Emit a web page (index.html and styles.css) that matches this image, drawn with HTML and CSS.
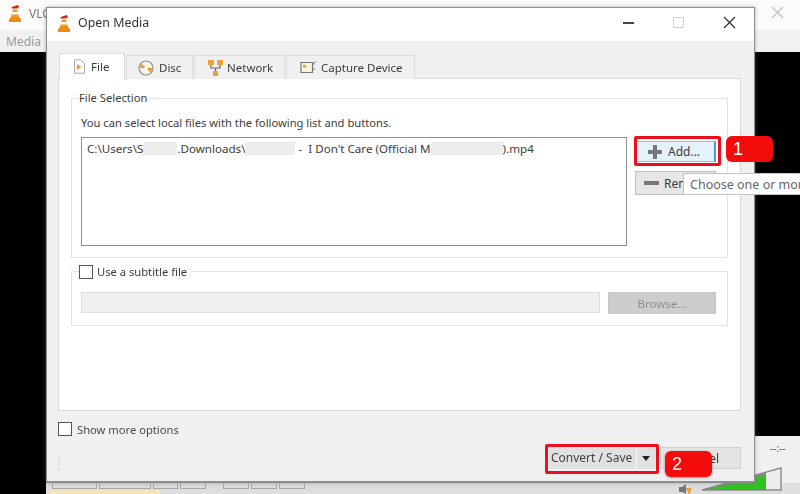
FILE: index.html
```html
<!DOCTYPE html>
<html lang="en">
<head>
<meta charset="utf-8">
<title>Open Media</title>
<link rel="stylesheet" href="styles.css">
</head>
<body>
<svg class="defs" width="0" height="0" aria-hidden="true">
  <symbol id="cone" viewBox="0 0 14 18">
    <path d="M1 15.5 3 13h8l2 2.5V18H1z" fill="#f08a12"/>
    <path d="M5.2 4.5h3.6L11 13H3z" fill="#f39a1e"/>
    <path d="M4.4 8h5.2l.7 2.4H3.7z" fill="#fff"/>
    <path d="M3.2 3.2 9.5 1l1.6 1.2-1.5 2.4-5 .4z" fill="#d8261c"/>
    <path d="M4.2 4.6h5.4v1H4.2z" fill="#f3f3f3"/>
  </symbol>
</svg>
<main class="desktop">
  <section class="vlc">
    <div class="vlc-title">
      <svg class="cone-bg"><use href="#cone"/></svg>
      <span class="vlc-name">VLC</span>
      <svg class="vlc-close" width="13" height="13" viewBox="0 0 13 13"><path d="M1 1l11 11M12 1 1 12" stroke="#c6c6c6" stroke-width="1.500"/></svg>
    </div>
    <div class="vlc-menu">Media</div>
    <div class="vlc-video"></div>
    <div class="vlc-controls">
      <div class="ctl-black"></div>
      <div class="ctl-main">
        <div class="ctl-spacer"></div>
        <div class="ctl-strip">
          <i class="ctl-btn w-a"></i><i class="ctl-btn w-b"></i><i class="ctl-btn w-c"></i><i class="ctl-btn w-d"></i><i class="ctl-gap"></i><i class="ctl-btn w-d"></i><i class="ctl-btn w-d"></i><i class="ctl-btn w-d"></i>
        </div>
      </div>
    </div>
    <span class="vlc-time">--:--</span>
    <svg class="volume" width="82" height="26" viewBox="0 0 82 26">
      <path d="M1 24 80 2v22z" fill="#ececec" stroke="#8b8b8b" stroke-width="1.4"/>
      <path d="M2 24 65 7v17z" fill="#2fc21f"/>
      <path d="M2 24 65 7v3L8 24z" fill="#6d9c64"/>
    </svg>
    <svg class="speaker" width="16" height="13" viewBox="0 0 16 13">
      <path d="M1 4h3l4-3v10L4 9H1z" fill="#777"/>
      <path d="m8 5 3 7 3-7z" fill="#ef9a33"/>
    </svg>
  </section>

  <section class="dialog">
    <header class="titlebar">
      <svg class="cone"><use href="#cone"/></svg>
      <h1 class="title">Open Media</h1>
      <div class="win-controls">
        <span class="win-min"></span>
        <span class="win-max"></span>
        <svg class="win-close" width="13" height="13" viewBox="0 0 13 13"><path d="M1 1l11 11M12 1 1 12" stroke="#333" stroke-width="1.3"/></svg>
      </div>
    </header>

    <div class="dialog-body">
      <nav class="tabs">
        <div class="tab tab-file is-active">
          <svg width="13" height="15" viewBox="0 0 13 15"><path d="M1.500.8h6.500l3.500 3.500v9.900h-10z" fill="#fff" stroke="#aaa"/><path d="M4 5l4.500 3L4 11z" fill="#f09a24"/></svg>
          File
        </div>
        <div class="tab tab-disc">
          <svg width="16" height="16" viewBox="0 0 16 16"><circle cx="8" cy="8" r="7" fill="#fbf4e6" stroke="#8d8d8d" stroke-width="1.2"/><path d="M8 8 3.500 3.800A6 6 0 0 0 2.200 8zM8 8l4.500 4.200A6 6 0 0 0 14 8z" fill="#ef9a24"/><circle cx="8" cy="8" r="1.600" fill="#fff"/></svg>
          Disc
        </div>
        <div class="tab tab-net">
          <svg width="17" height="16" viewBox="0 0 17 16"><path d="M4 5v3h9V5M8.500 8v4" fill="none" stroke="#666" stroke-width="1.200"/><path d="M1 0h6v5H1zM10 0h6v5h-6zM6 11h5v5H6z" fill="#e9a33c"/></svg>
          Network
        </div>
        <div class="tab tab-cap">
          <svg width="16" height="15" viewBox="0 0 16 15"><path d="M1 2.500h11.500v10H1z" fill="#fdf3dc" stroke="#777" stroke-width="1.200"/><path d="M3 5h3v2.500H3z" fill="#ef9a24"/><path d="M12.500 5 15.500 1.500M12.500 9H15" stroke="#777"/></svg>
          Capture Device
        </div>
      </nav>

      <div class="panel">
        <div class="group group-files">
          <div class="legend">File Selection</div>
          <p class="hint">You can select local files with the following list and buttons.</p>
          <div class="files-row">
            <div class="listbox">C:\Users\S<span class="smudge s1"></span>.Downloads\<span class="smudge s2"></span> -&nbsp; I Don't Care (Official M<span class="smudge s3"></span>).mp4</div>
            <div class="side-buttons">
              <button class="btn btn-add" type="button"><span class="plus"></span>Add...</button>
              <button class="btn btn-rem" type="button"><span class="minus"></span>Remove</button>
            </div>
          </div>
        </div>

        <div class="group group-sub">
          <div class="legend legend-check"><span class="check"></span>Use a subtitle file</div>
          <div class="sub-row">
            <div class="sub-input"></div>
            <button class="btn btn-browse" type="button" disabled>Browse...</button>
          </div>
        </div>
      </div>

      <div class="more-row"><span class="check"></span>Show more options</div>
      <div class="ghost"></div>

      <footer class="actions">
        <div class="split">
          <span class="split-label">Convert / Save</span>
          <span class="split-arrow"></span>
        </div>
        <button class="btn btn-cancel" type="button">Cancel</button>
      </footer>
    </div>
  </section>

  <div class="tooltip">Choose one or more media files to open</div>
  <div class="hl hl-add"></div>
  <div class="hl hl-convert"></div>
  <div class="badge badge-1">1</div>
  <div class="badge badge-2">2</div>
</main>
</body>
</html>
```

FILE: styles.css
```css
* { box-sizing: border-box; }
html, body { margin: 0; padding: 0; }
body {
  width: 800px;
  height: 494px;
  overflow: hidden;
  font-family: "Noto Sans", "Open Sans", sans-serif;
  font-size: 11.2px;
  color: #3c3c3c;
  background: #000;
}
.defs { position: absolute; }
.desktop {
  position: relative;
  width: 800px;
  height: 494px;
  overflow: hidden;
  filter: blur(0.55px);
}

/* background VLC window */
.vlc { display: flex; flex-direction: column; height: 100%; }
.vlc-title {
  height: 30px;
  background: #fbfbfb;
  display: flex;
  align-items: flex-start;
  padding: 4px 0 0 8px;
  position: relative;
}
.cone-bg { width: 14px; height: 18px; }
.vlc-name { margin: 1px 0 0 7px; font-size: 12px; color: #777; }
.vlc-close { position: absolute; left: 771px; top: 6px; }
.vlc-menu {
  height: 22px;
  background: #f1f1f1;
  padding: 3px 0 0 6px;
  font-size: 12px;
  color: #9a9a9a;
}
.vlc-video { flex: 1; background: #000; }
.vlc-controls { height: 58px; display: flex; }
.ctl-black { width: 46px; background: #000; }
.ctl-main { flex: 1; background: #f0f0f0; display: flex; flex-direction: column; }
.ctl-spacer { flex: 1; }
.ctl-strip {
  height: 11px;
  display: flex;
  gap: 2px;
  padding-left: 6px;
  background:
    linear-gradient(#f4e2c2, #f4e2c2) 4px 7px / 110px 4px no-repeat,
    #dedede;
}
.ctl-btn { height: 6px; background: #dcdcdc; border: 1px solid #a8a8a8; border-top: 0; }
.w-a { width: 45px; }
.w-b { width: 52px; }
.w-c { width: 25px; }
.w-d { width: 26px; }
.ctl-gap { width: 13px; }
.vlc-time { position: absolute; left: 770px; top: 441px; font-size: 10px; color: #555; }
.volume { position: absolute; left: 701px; top: 466px; }
.speaker { position: absolute; left: 678px; top: 483px; }

/* dialog */
.dialog {
  position: absolute;
  left: 46px;
  top: 7px;
  width: 709px;
  height: 476px;
  border: 1px solid #8d8d8d;
  border-bottom-width: 2px;
  background: #f0f0f0;
  box-shadow: 0 0 4px rgba(120,120,120,.55);
  display: flex;
  flex-direction: column;
}
.titlebar {
  height: 33px;
  background: #fff;
  display: flex;
  align-items: center;
  padding: 0 0 4px 10px;
  flex: none;
}
.cone { width: 14px; height: 18px; }
.title { margin: 0 0 0 7px; font-size: 12.4px; font-weight: 400; color: #333; }
.win-controls { margin-left: auto; display: flex; align-items: center; gap: 39px; padding-right: 18px; }
.win-min { width: 11px; height: 2px; background: #444; }
.win-max { width: 11px; height: 11px; border: 1px solid #d2d2d2; }
.win-close { display: block; }

.dialog-body { flex: 1; padding: 12px 13px 0 11px; display: flex; flex-direction: column; position: relative; }
.tabs { display: flex; height: 26px; padding-left: 1px; gap: 1px; position: relative; z-index: 1; }
.tab {
  display: flex;
  align-items: center;
  gap: 5px;
  height: 24px;
  margin-top: 2px;
  background: #f0f0f0;
  border: 1px solid #dcdcdc;
  border-bottom: 0;
  padding: 0 0 0 12px;
  font-size: 11.5px;
}
.tab.is-active { height: 27px; margin-top: 0; background: #fff; padding: 0 0 2px 13px; }
.tab-file { width: 66px; }
.tab-disc { width: 67px; padding-left: 11px; }
.tab-net { width: 91px; gap: 3px; }
.tab-cap { width: 129px; padding-left: 13px; }

.panel {
  height: 333px;
  margin-top: -1px;
  background: #fff;
  border: 1px solid #d9d9d9;
  padding: 19px 12px 0 12px;
}
.group { border: 1px solid #e2e2e2; padding: 0 10px 0 9px; }
.group-files { height: 160px; }
.group-sub { height: 55px; margin-top: 13px; }
.legend {
  width: fit-content;
  margin-top: -9px;
  margin-left: -2px;
  padding: 0 4px 0 0;
  background: #fff;
  height: 16px;
  line-height: 16px;
}
.hint { margin: 9px 0 0; height: 16px; line-height: 16px; }
.files-row { display: flex; margin-top: 6px; }
.listbox {
  width: 546px;
  height: 109px;
  border: 1px solid #8f8f8f;
  padding: 2px 0 0 5px;
  line-height: 18px;
  white-space: nowrap;
  font-size: 11.6px;
  flex: none;
}
.smudge { display: inline-block; height: 13px; vertical-align: -2px; background: #ededed; }
.s1 { width: 34px; }
.s2 { width: 50px; }
.s3 { width: 72px; }

.side-buttons { display: flex; flex-direction: column; gap: 9px; margin: 4px 0 0 9px; width: 80px; }
.btn {
  font: inherit;
  font-size: 12px;
  color: #3c3c3c;
  border: 1px solid #bdbdbd;
  background: #e6e6e6;
  padding: 0;
}
.btn-add {
  height: 21px;
  background: #e5f1fb;
  border: 1px solid #8fbde4;
  border-right: 2px solid #4f97d6;
  display: flex;
  align-items: center;
  padding-left: 11px;
  gap: 6px;
}
.plus {
  width: 14px; height: 14px;
  background:
    linear-gradient(#777,#777) center/14px 4px no-repeat,
    linear-gradient(#777,#777) center/4px 14px no-repeat;
}
.btn-rem {
  height: 24px;
  margin-left: -1px;
  display: flex;
  align-items: center;
  padding-left: 8px;
  gap: 5px;
  overflow: hidden;
  white-space: nowrap;
}
.minus { width: 15px; height: 4px; background: #777; flex: none; }

.check {
  display: inline-block;
  width: 14px;
  height: 14px;
  background: #fff;
  border: 1px solid #555;
  flex: none;
}
.group-sub .legend-check { display: flex; align-items: center; gap: 4px; margin: -8px 0 0 -2px; }
.sub-row { display: flex; gap: 8px; margin-top: 12px; }
.sub-input { width: 519px; height: 21px; background: #f0f0f0; border: 1px solid #dedede; }
.btn-browse { width: 108px; height: 22px; background: #cdcdcd; border-color: #c6c6c6; color: #8e8e8e; font-size: 11.5px; }

.more-row { display: flex; align-items: center; gap: 5px; margin-top: 11px; height: 14px; color: #4a4a4a; }
.ghost { width: 4px; height: 14px; margin-top: 20px; border: 1px solid #dedede; border-right: 0; }
.actions { position: absolute; left: 502px; top: 406px; display: flex; align-items: center; }
.split {
  width: 108px;
  height: 22px;
  background: #e1e1e1;
  display: flex;
  align-items: center;
  margin-right: 3px;
  padding-left: 2px;
  color: #444;
  font-size: 12px;
}
.split-label { width: 86px; border-right: 1px solid #fafafa; line-height: 22px; }
.split-arrow {
  margin-left: 5px;
  border-left: 4px solid transparent;
  border-right: 4px solid transparent;
  border-top: 5px solid #222;
}
.btn-cancel { width: 81px; height: 22px; background: #e3e3e3; border-color: #d0d0d0; text-align: center; font-size: 12px; }

/* overlays */
.tooltip {
  position: absolute;
  left: 683px;
  top: 173px;
  width: 250px;
  height: 22px;
  padding-left: 6px;
  line-height: 21px;
  background: #fff;
  border: 1px solid #c4c4c4;
  font-size: 12.5px;
  color: #666;
  white-space: nowrap;
}
.hl { position: absolute; border: 3px solid #ea0f1c; border-radius: 2px; }
.hl-add { left: 634px; top: 136px; width: 87px; height: 30px; }
.hl-convert { left: 545px; top: 444px; width: 114px; height: 30px; }
.badge {
  position: absolute;
  width: 47px;
  height: 26px;
  border-radius: 6px;
  background: #f40c0c;
  color: #fff;
  font-size: 18px;
  line-height: 27px;
  padding-left: 7px;
  font-family: "Liberation Sans", sans-serif;
}
.badge-1 { left: 726px; top: 136px; }
.badge-2 { left: 665px; top: 451px; box-shadow: 0 1px 3px rgba(0,0,0,.35); }
```
